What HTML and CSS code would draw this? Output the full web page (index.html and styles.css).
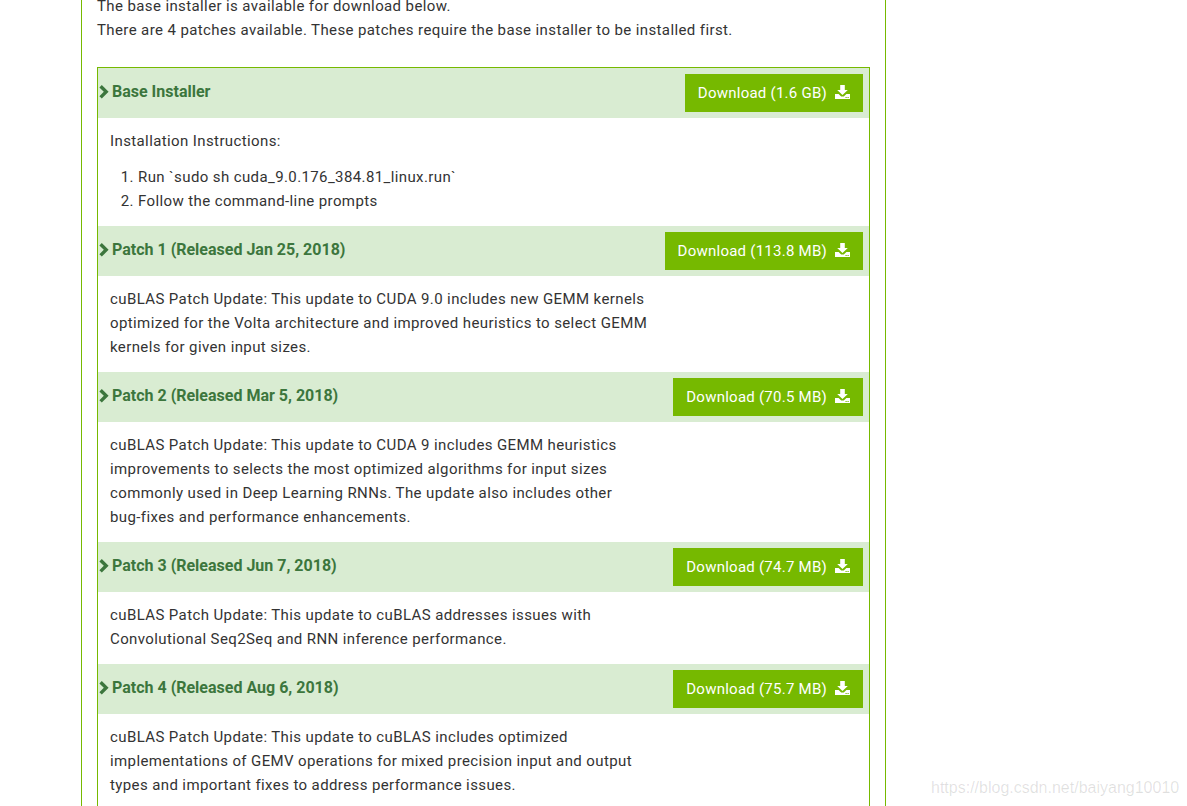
FILE: index.html
```html
<!DOCTYPE html>
<html lang="en">
<head>
<meta charset="utf-8">
<title>CUDA Toolkit 9.0 Downloads</title>
<link rel="stylesheet" href="styles.css">
</head>
<body>
<main class="page">
  <p class="intro">The base installer is available for download below.<br>There are 4 patches available. These patches require the base installer to be installed first.</p>
  <section class="table">
    <header class="head">
      <h3 class="title"><svg class="chev" viewBox="0 0 10 14"><path d="M2.8 0 9.6 6.8 2.8 13.6 0.4 11.2 4.8 6.8 0.4 2.4Z"/></svg>Base Installer</h3>
      <a class="btn">Download (1.6 GB)<svg class="dl" viewBox="0 0 15 14"><path d="M5.2 0h4.6v5h3L7.5 10 2.2 5h3ZM0 9h3.6l2.6 2.4h2.6L11.4 9H15v5H0Zm10.5 3v.9h1.2V12Zm2 0v.9h1.2V12Z" fill-rule="evenodd"/></svg></a>
    </header>
    <div class="body">
      <p class="para">Installation Instructions:</p>
      <ol class="steps">
        <li>Run `sudo sh cuda_9.0.176_384.81_linux.run`</li>
        <li>Follow the command-line prompts</li>
      </ol>
    </div>
    <header class="head">
      <h3 class="title"><svg class="chev" viewBox="0 0 10 14"><path d="M2.8 0 9.6 6.8 2.8 13.6 0.4 11.2 4.8 6.8 0.4 2.4Z"/></svg>Patch 1 (Released Jan 25, 2018)</h3>
      <a class="btn">Download (113.8 MB)<svg class="dl" viewBox="0 0 15 14"><path d="M5.2 0h4.6v5h3L7.5 10 2.2 5h3ZM0 9h3.6l2.6 2.4h2.6L11.4 9H15v5H0Zm10.5 3v.9h1.2V12Zm2 0v.9h1.2V12Z" fill-rule="evenodd"/></svg></a>
    </header>
    <div class="body">
      <p class="para">cuBLAS Patch Update: This update to CUDA 9.0 includes new GEMM kernels<br>optimized for the Volta architecture and improved heuristics to select GEMM<br>kernels for given input sizes.</p>
    </div>
    <header class="head">
      <h3 class="title"><svg class="chev" viewBox="0 0 10 14"><path d="M2.8 0 9.6 6.8 2.8 13.6 0.4 11.2 4.8 6.8 0.4 2.4Z"/></svg>Patch 2 (Released Mar 5, 2018)</h3>
      <a class="btn">Download (70.5 MB)<svg class="dl" viewBox="0 0 15 14"><path d="M5.2 0h4.6v5h3L7.5 10 2.2 5h3ZM0 9h3.6l2.6 2.4h2.6L11.4 9H15v5H0Zm10.5 3v.9h1.2V12Zm2 0v.9h1.2V12Z" fill-rule="evenodd"/></svg></a>
    </header>
    <div class="body">
      <p class="para">cuBLAS Patch Update: This update to CUDA 9 includes GEMM heuristics<br>improvements to selects the most optimized algorithms for input sizes<br>commonly used in Deep Learning RNNs. The update also includes other<br>bug-fixes and performance enhancements.</p>
    </div>
    <header class="head">
      <h3 class="title"><svg class="chev" viewBox="0 0 10 14"><path d="M2.8 0 9.6 6.8 2.8 13.6 0.4 11.2 4.8 6.8 0.4 2.4Z"/></svg>Patch 3 (Released Jun 7, 2018)</h3>
      <a class="btn">Download (74.7 MB)<svg class="dl" viewBox="0 0 15 14"><path d="M5.2 0h4.6v5h3L7.5 10 2.2 5h3ZM0 9h3.6l2.6 2.4h2.6L11.4 9H15v5H0Zm10.5 3v.9h1.2V12Zm2 0v.9h1.2V12Z" fill-rule="evenodd"/></svg></a>
    </header>
    <div class="body">
      <p class="para">cuBLAS Patch Update: This update to cuBLAS addresses issues with<br>Convolutional Seq2Seq and RNN inference performance.</p>
    </div>
    <header class="head">
      <h3 class="title"><svg class="chev" viewBox="0 0 10 14"><path d="M2.8 0 9.6 6.8 2.8 13.6 0.4 11.2 4.8 6.8 0.4 2.4Z"/></svg>Patch 4 (Released Aug 6, 2018)</h3>
      <a class="btn">Download (75.7 MB)<svg class="dl" viewBox="0 0 15 14"><path d="M5.2 0h4.6v5h3L7.5 10 2.2 5h3ZM0 9h3.6l2.6 2.4h2.6L11.4 9H15v5H0Zm10.5 3v.9h1.2V12Zm2 0v.9h1.2V12Z" fill-rule="evenodd"/></svg></a>
    </header>
    <div class="body">
      <p class="para">cuBLAS Patch Update: This update to cuBLAS includes optimized<br>implementations of GEMV operations for mixed precision input and output<br>types and important fixes to address performance issues.</p>
    </div>
  </section>
</main>
<div class="mark">https://blog.csdn.net/baiyang10010</div>
</body>
</html>
```
FILE: styles.css
```css
html, body {
  margin: 0;
  height: 806px;
  overflow: hidden;
  background: #fff;
}
body {
  font-family: Roboto, "Liberation Sans", sans-serif;
  font-size: 15px;
  line-height: 24px;
  letter-spacing: 0.39px;
  color: #333;
}
.page {
  box-sizing: border-box;
  width: 805px;
  margin: -6px 0 0 81px;
  padding: 0 15px 40px;
  border-left: 1px solid #76b900;
  border-right: 1px solid #76b900;
}
.intro {
  margin: 0 0 25px;
}
.table {
  width: 773px;
  box-sizing: border-box;
  border: 1px solid #76b900;
}
.head {
  display: flex;
  align-items: center;
  justify-content: space-between;
  height: 50px;
  padding: 0 6px 0 0;
  box-sizing: border-box;
  background: #d9ecd2;
}
.title {
  display: flex;
  align-items: center;
  margin: 0 0 2px;
  font-size: 16px;
  font-weight: 700;
  line-height: 24px;
  letter-spacing: 0;
  color: #3c763d;
}
.chev {
  width: 10px;
  height: 14px;
  margin: 0 3px 0 1px;
  fill: #3c763d;
}
.btn {
  display: flex;
  align-items: center;
  height: 38px;
  padding: 0 13px;
  background: #76b900;
  color: #fff;
  letter-spacing: 0.25px;
}
.dl {
  width: 15px;
  height: 14px;
  margin: -3px 0 0 8px;
  fill: #fff;
}
.body {
  padding: 11px 12px 13px;
}
.para {
  margin: 0;
}
.steps {
  margin: 12px 0 0;
  padding: 0 0 0 28px;
}
.mark {
  position: absolute;
  left: 931px;
  top: 778px;
  font-family: "Liberation Sans", sans-serif;
  font-size: 16px;
  line-height: 20px;
  letter-spacing: 0;
  color: rgba(0, 0, 0, 0.12);
}
```
